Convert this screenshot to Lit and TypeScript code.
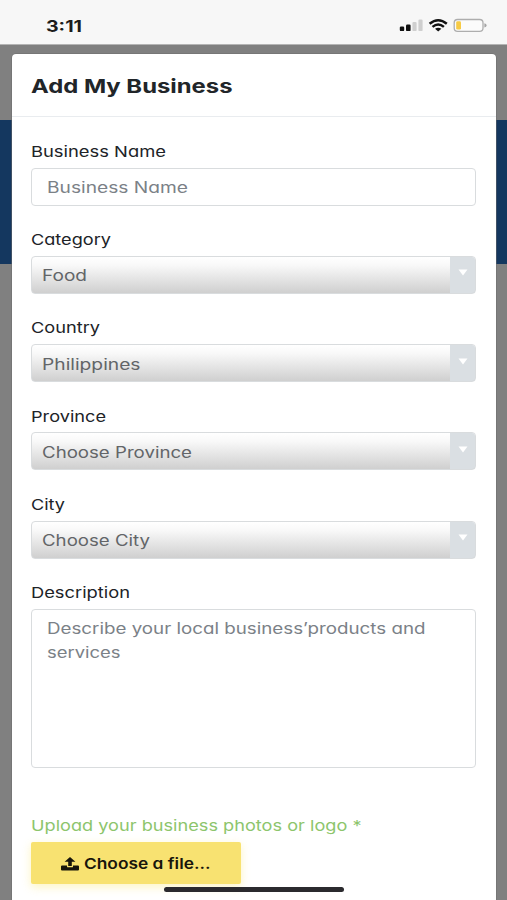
import { LitElement, html, css, svg } from "lit";
import { customElement, property } from "lit/decorators.js";

/** One line of text, stretched sideways to fill a given width. */
@customElement("wide-text")
class WideText extends LitElement {
  @property() text = "";
  @property({ type: Number }) width = 100;

  static styles = css`
    :host { display: block; white-space: nowrap; }
    span { display: inline-block; transform-origin: 0 50%; }
  `;

  render() {
    return html`<span>${this.text}</span>`;
  }

  updated() {
    const span = this.renderRoot.querySelector("span") as HTMLElement;
    span.style.transform = "none";
    const natural = span.getBoundingClientRect().width;
    if (natural > 0) span.style.transform = `scaleX(${this.width / natural})`;
  }
}

const selects = [
  { label: "Category", labelWidth: 80, value: "Food", valueWidth: 45 },
  { label: "Country", labelWidth: 69, value: "Philippines", valueWidth: 98.5 },
  { label: "Province", labelWidth: 75, value: "Choose Province", valueWidth: 150 },
  { label: "City", labelWidth: 34, value: "Choose City", valueWidth: 108 },
];

@customElement("app-root")
class AppRoot extends LitElement {
  static styles = css`
    :host {
      display: block;
      position: relative;
      height: 900px;
      overflow: hidden;
      background: linear-gradient(#808080 120.5px, #14375f 120.5px, #14375f 264.5px, #808080 264.5px);
      font-family: Inter, Lato, "Liberation Sans", sans-serif;
      font-feature-settings: "cv11";
      font-size: 15px;
      line-height: 24px;
      color: #212529;
    }
    * { box-sizing: border-box; }
    .status {
      height: 45px;
      background: #f7f7f7;
      border-bottom: 1px solid #b4b4b4;
      display: flex;
      align-items: center;
      justify-content: space-between;
      padding: 7px 20px 0 46px;
    }
    .time { font-size: 16px; font-weight: 650; color: #1c1c1c; }
    .status svg { display: block; margin-top: -1px; }
    .modal {
      margin: 9px 11px 0 12px;
      height: 860px;
      background: #fff;
      border-radius: 4px;
      box-shadow: 0 0 0 0.5px #6c6c6c;
    }
    .head {
      height: 63px;
      border-bottom: 1px solid #e9ecef;
      padding: 20px 20px 0 19.3px;
      font-size: 19.2px;
      font-weight: 700;
    }
    .body { padding: 22.6px 19.6px 0 19.4px; }
    .field { margin-bottom: 22.3px; }
    .label { height: 28px; color: #202327; font-weight: 430; padding-top: 0.2px; }
    .label wide-text, .upload wide-text { margin-left: -0.7px; }
    .control {
      height: 38px;
      border: 1px solid #d9dcde;
      border-radius: 4px;
      background: #fff;
      color: #7b8187;
      padding: 7px 14.5px;
      font-size: 15.2px;
    }
    .area { height: 159px; }
    .select {
      display: flex;
      justify-content: space-between;
      padding: 0 0 0 9.8px;
      color: #626568;
      background: linear-gradient(#fff, #f9f9f9 22%, #cfcfcf);
      overflow: hidden;
    }
    .select wide-text { padding-top: 7.4px; }
    .arrow {
      width: 25px;
      background: #dadfe3;
      display: flex;
      justify-content: center;
      padding-top: 12.6px;
    }
    .arrow svg { display: block; }
    .last { margin-bottom: 46px; }
    .upload { color: #8dc56c; height: 28px; }
    .choose {
      width: 209.5px;
      height: 42px;
      border-radius: 2px;
      background: #f8e271;
      box-shadow: 0 3px 10px rgba(250, 232, 120, 0.45);
      display: flex;
      align-items: center;
      gap: 4.5px;
      padding: 1.6px 0 0 29.8px;
      color: #17150b;
      font-size: 15px;
      font-weight: 600;
    }
    .home {
      position: absolute;
      left: 164px;
      top: 887px;
      width: 180px;
      height: 5px;
      border-radius: 3px;
      background: #2b2a2e;
    }
  `;

  private label(text: string, width: number) {
    return html`<div class="label"><wide-text .text=${text} .width=${width}></wide-text></div>`;
  }

  render() {
    return html`
      <div class="status">
        <wide-text class="time" .text=${"3:11"} .width=${36}></wide-text>
        <svg width="88" height="14" viewBox="399 18.5 88 14">
          ${svg`
            <rect x="399.8" y="27" width="4.4" height="4.6" rx="1.2" fill="#111"/>
            <rect x="406" y="25" width="4.6" height="6.6" rx="1.2" fill="#111"/>
            <rect x="412.4" y="22.4" width="4.2" height="9.2" rx="1.2" fill="#cfcfcf"/>
            <rect x="418.4" y="20" width="4.2" height="11.6" rx="1.2" fill="#cfcfcf"/>
            <g fill="none" stroke="#111" stroke-width="2.5">
              <path d="M429.6 24.2Q438.2 17.2 446.8 24.2"/>
              <path d="M432.5 27.4Q438.2 22.7 443.9 27.4"/>
            </g>
            <path d="M435 29.3Q438.2 27 441.4 29.3L438.2 32Z" fill="#111"/>
            <rect x="454.2" y="20" width="28.8" height="11.8" rx="3.4" fill="#fbfbfb" stroke="#adadad" stroke-width="1.3"/>
            <rect x="456.2" y="21.7" width="4.8" height="8.4" rx="1.4" fill="#f7cb45"/>
            <path d="M484.4 23.8Q486.6 24.3 486.6 25.9Q486.6 27.5 484.4 28Z" fill="#a5a5a5"/>
          `}
        </svg>
      </div>
      <div class="modal">
        <div class="head"><wide-text .text=${"Add My Business"} .width=${201.5}></wide-text></div>
        <div class="body">
          <div class="field">
            ${this.label("Business Name", 135)}
            <div class="control"><wide-text .text=${"Business Name"} .width=${141}></wide-text></div>
          </div>
          ${selects.map(
            (s) => html`
              <div class="field">
                ${this.label(s.label, s.labelWidth)}
                <div class="control select">
                  <wide-text .text=${s.value} .width=${s.valueWidth}></wide-text>
                  <div class="arrow">
                    <svg width="10" height="7" viewBox="0 0 10 7"><path d="M0.5 0.5H9.5L5 6.5Z" fill="#fff" /></svg>
                  </div>
                </div>
              </div>
            `
          )}
          <div class="field last">
            ${this.label("Description", 99)}
            <div class="control area">
              <wide-text .text=${"Describe your local business’products and"} .width=${378.5}></wide-text>
              <wide-text .text=${"services"} .width=${73.5}></wide-text>
            </div>
          </div>
          <div class="upload">
            <wide-text .text=${"Upload your business photos or logo *"} .width=${330.5}></wide-text>
          </div>
          <div class="choose">
            <svg width="18" height="14" viewBox="0 0 18 14">
              <path fill="#17150b" d="M9 0L14.4 4.8H10.8V9H7.2V4.8H3.6Z" />
              <path fill="#17150b" d="M1 8.6H6V9.4Q6 10.3 7 10.3H11Q12 10.3 12 9.4V8.6H17Q18 8.6 18 9.5V12.6Q18 13.5 17 13.5H1Q0 13.5 0 12.6V9.5Q0 8.6 1 8.6Z" />
            </svg>
            <wide-text .text=${"Choose a file..."} .width=${126.5}></wide-text>
          </div>
        </div>
      </div>
      <div class="home"></div>
    `;
  }
}
